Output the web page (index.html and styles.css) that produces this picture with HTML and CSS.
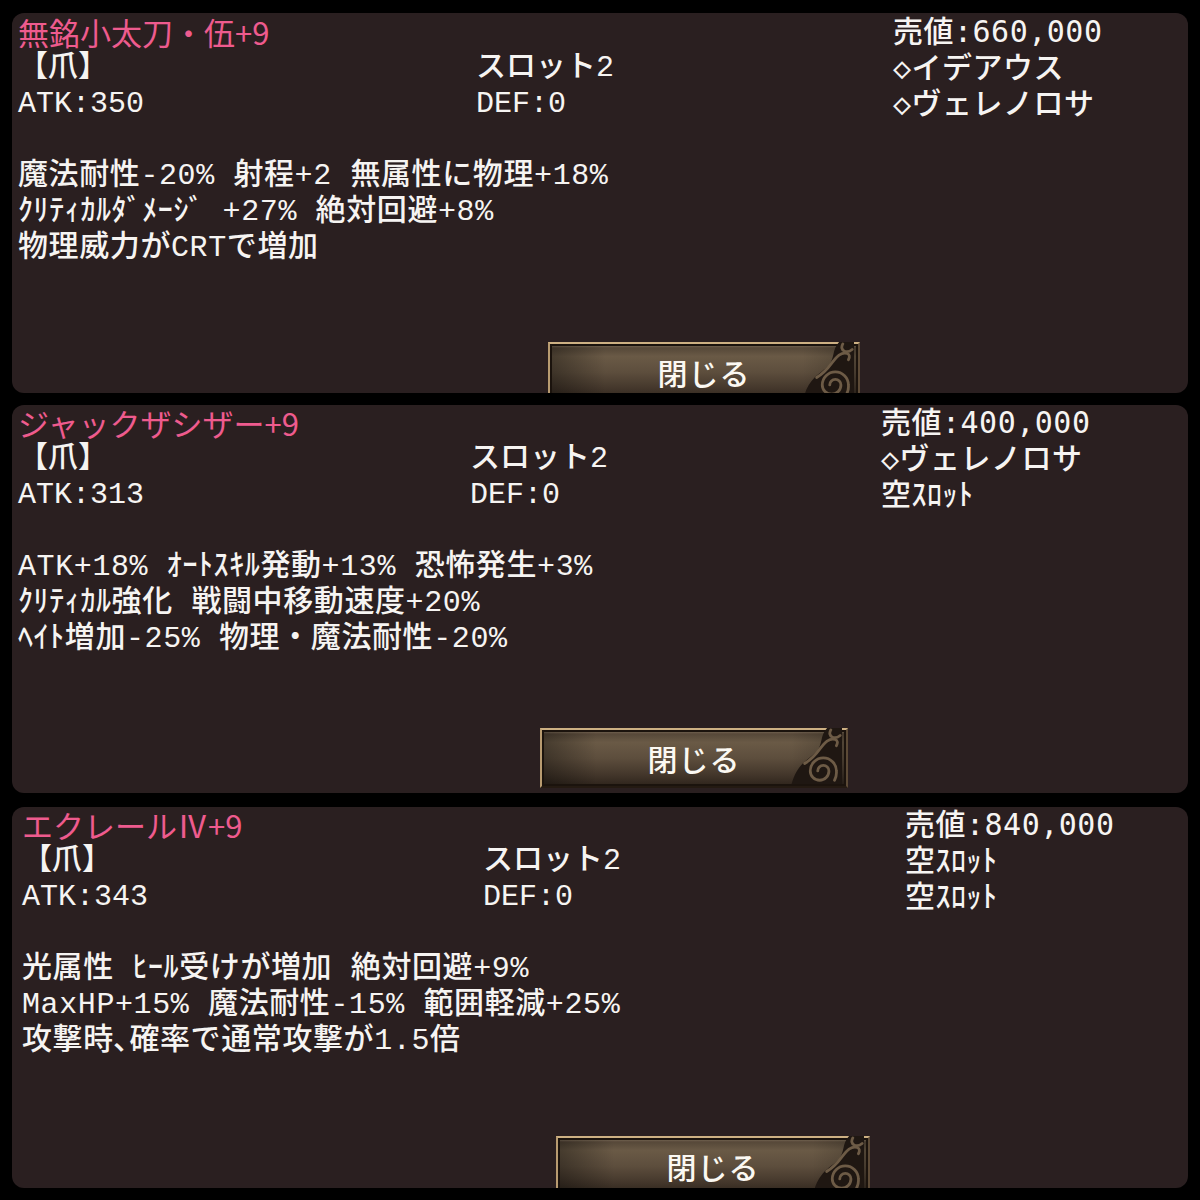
FILE: index.html
```html
<!DOCTYPE html>
<html lang="ja">
<head>
<meta charset="utf-8">
<link rel="stylesheet" href="styles.css">
</head>
<body>
<main class="stack">
  <section class="panel p1">
    <div class="info">
      <div class="col">
        <div class="name">無銘小太刀・伍+9</div>
        <div>【爪】</div>
        <div>ATK:350</div>
      </div>
      <div class="col">
        <div>&nbsp;</div>
        <div>スロット2</div>
        <div>DEF:0</div>
      </div>
      <div class="col side">
        <div>売値:660,000</div>
        <div>◇イデアウス</div>
        <div>◇ヴェレノロサ</div>
      </div>
    </div>
    <div class="effects">
      <div>魔法耐性-20% 射程+2 無属性に物理+18%</div>
      <div>ｸﾘﾃｨｶﾙﾀﾞﾒｰｼﾞ +27% 絶対回避+8%</div>
      <div>物理威力がCRTで増加</div>
    </div>
    <div class="btn-slot">
      <div class="btn">閉じる<svg class="swirl" viewBox="0 0 60 60"><path class="sw-bg" d="M60 0 L44 0 C36 8 40 18 32 26 C24 34 12 38 6 60 L60 60 Z"/><path class="sw-line" d="M34 46 a6 6 0 1 1 12 0 a10 10 0 1 1 -20 0 a14 14 0 1 1 28 0 a18 18 0 0 1 -2 10"/><path class="sw-line" d="M20 38 C34 30 36 20 44 14 C50 10 58 12 54 19"/><path class="sw-line" d="M48 2 C44 9 52 13 58 8"/></svg></div>
    </div>
  </section>

  <section class="panel p2">
    <div class="info">
      <div class="col">
        <div class="name">ジャックザシザー+9</div>
        <div>【爪】</div>
        <div>ATK:313</div>
      </div>
      <div class="col">
        <div>&nbsp;</div>
        <div>スロット2</div>
        <div>DEF:0</div>
      </div>
      <div class="col side">
        <div>売値:400,000</div>
        <div>◇ヴェレノロサ</div>
        <div>空ｽﾛｯﾄ</div>
      </div>
    </div>
    <div class="effects">
      <div>ATK+18% ｵｰﾄｽｷﾙ発動+13% 恐怖発生+3%</div>
      <div>ｸﾘﾃｨｶﾙ強化 戦闘中移動速度+20%</div>
      <div>ﾍｲﾄ増加-25% 物理・魔法耐性-20%</div>
    </div>
    <div class="btn-slot">
      <div class="btn">閉じる<svg class="swirl" viewBox="0 0 60 60"><path class="sw-bg" d="M60 0 L44 0 C36 8 40 18 32 26 C24 34 12 38 6 60 L60 60 Z"/><path class="sw-line" d="M34 46 a6 6 0 1 1 12 0 a10 10 0 1 1 -20 0 a14 14 0 1 1 28 0 a18 18 0 0 1 -2 10"/><path class="sw-line" d="M20 38 C34 30 36 20 44 14 C50 10 58 12 54 19"/><path class="sw-line" d="M48 2 C44 9 52 13 58 8"/></svg></div>
    </div>
  </section>

  <section class="panel p3">
    <div class="info">
      <div class="col">
        <div class="name">エクレールⅣ+9</div>
        <div>【爪】</div>
        <div>ATK:343</div>
      </div>
      <div class="col">
        <div>&nbsp;</div>
        <div>スロット2</div>
        <div>DEF:0</div>
      </div>
      <div class="col side">
        <div>売値:840,000</div>
        <div>空ｽﾛｯﾄ</div>
        <div>空ｽﾛｯﾄ</div>
      </div>
    </div>
    <div class="effects">
      <div>光属性 ﾋｰﾙ受けが増加 絶対回避+9%</div>
      <div>MaxHP+15% 魔法耐性-15% 範囲軽減+25%</div>
      <div>攻撃時､確率で通常攻撃が1.5倍</div>
    </div>
    <div class="btn-slot">
      <div class="btn">閉じる<svg class="swirl" viewBox="0 0 60 60"><path class="sw-bg" d="M60 0 L44 0 C36 8 40 18 32 26 C24 34 12 38 6 60 L60 60 Z"/><path class="sw-line" d="M34 46 a6 6 0 1 1 12 0 a10 10 0 1 1 -20 0 a14 14 0 1 1 28 0 a18 18 0 0 1 -2 10"/><path class="sw-line" d="M20 38 C34 30 36 20 44 14 C50 10 58 12 54 19"/><path class="sw-line" d="M48 2 C44 9 52 13 58 8"/></svg></div>
    </div>
  </section>
</main>
</body>
</html>
```

FILE: styles.css
```css
html, body {
  margin: 0;
  padding: 0;
  background: #000;
}

.stack {
  display: flex;
  flex-direction: column;
  padding: 13px 12px 0;
  width: 1176px;
}

.panel {
  background: #2a1f20;
  border-radius: 12px;
  color: #f6f4f2;
  font-family: "Liberation Mono", "Noto Sans CJK JP", monospace;
  font-size: 30px;
  font-weight: 500;
  line-height: 36px;
  white-space: nowrap;
  display: flex;
  flex-direction: column;
  box-sizing: border-box;
}

.p1 { height: 380px; padding-top: 1px; }
.p2 { height: 388px; margin-top: 12px; }
.p3 { height: 381px; margin-top: 14px; }

.info {
  display: grid;
}

.p1 .info { grid-template-columns: 458px 417px 1fr; padding-left: 6px; }
.p2 .info { grid-template-columns: 452px 411px 1fr; padding-left: 6px; }
.p3 .info { grid-template-columns: 461px 422px 1fr; padding-left: 10px; }

.name {
  color: #ee5b8e;
  font-family: "Noto Sans CJK JP", sans-serif;
  font-weight: 400;
  font-size: 31px;
  line-height: 36px;
}

.side {
  font-family: "DejaVu Sans Mono", "Noto Sans CJK JP", monospace;
  letter-spacing: 0.5px;
}

.effects {
  margin-top: 36px;
  letter-spacing: 0.6px;
}

.p1 .effects, .p2 .effects { padding-left: 6px; }
.p3 .effects { padding-left: 10px; }

.btn-slot {
  flex: 1;
  min-height: 0;
  overflow: hidden;
}

.btn {
  position: relative;
  width: 312px;
  height: 60px;
  box-sizing: border-box;
  display: flex;
  align-items: center;
  justify-content: center;
  font-family: "Noto Sans CJK JP", sans-serif;
  font-size: 30px;
  line-height: 40px;
  color: #fbf8f2;
  letter-spacing: 1px;
  border: 2px solid;
  border-color: #cdb083 #5c4a36 #241a12 #b89b70;
  background:
    linear-gradient(90deg, rgba(0,0,0,0.35) 0%, rgba(0,0,0,0) 18%, rgba(0,0,0,0) 82%, rgba(0,0,0,0.25) 100%),
    linear-gradient(180deg, #4c3f32 0%, #6a5a46 22%, #5d4e3d 50%, #45382c 78%, #2e241c 100%);
  box-shadow: inset 0 0 0 2px #1b130d, inset 0 3px 2px rgba(255,230,190,0.18);
}

.p1 .btn { margin: 76px 0 0 536px; }
.p2 .btn { margin: 71px 0 0 528px; width: 308px; }
.p3 .btn { margin: 77px 0 0 544px; width: 314px; }

.swirl {
  position: absolute;
  right: 2px;
  bottom: 2px;
  width: 60px;
  height: 56px;
}

.sw-bg { fill: #1f1712; }
.sw-line { fill: none; stroke: #6d5b46; stroke-width: 3; stroke-linecap: round; }
```
